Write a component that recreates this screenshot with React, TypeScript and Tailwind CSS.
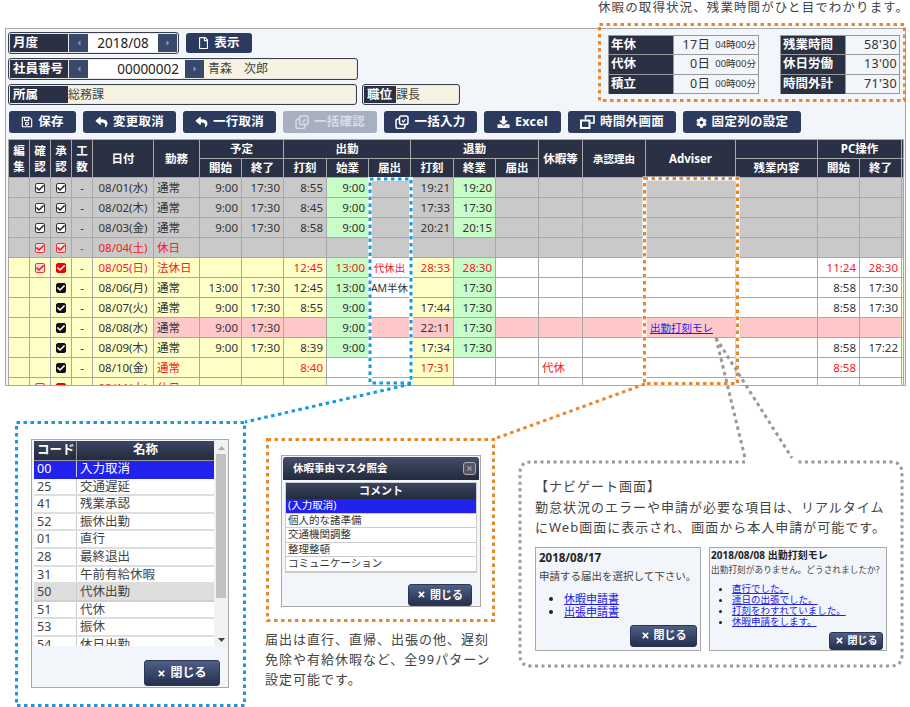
import React from "react";
import { FaRegFile, FaRegSave, FaReply, FaDownload, FaCog, FaTimes, FaCaretLeft, FaCaretRight, FaCheck } from "react-icons/fa";

const G = "bg-[#c9c9c9]";
const Y = "bg-[#ffffc8]";
const P = "bg-[#ffc8c8]";
const W = "bg-white";
const L = "bg-[#c8fcc8]";

const widths = [21, 21, 21, 21, 61, 46, 42, 42, 43, 42, 42, 43, 42, 43, 44, 63, 90, 82, 42, 42, 2];

const bgGray = [G, G, G, G, G, G, G, G, G, L, G, G, L, G, G, G, G, G, G, G, G];
const bgGrayNone = Array(21).fill(G);
const bgYellow = [Y, Y, Y, Y, Y, Y, Y, Y, Y, L, W, Y, L, W, W, W, W, W, W, W, Y];
const bgPink = [Y, Y, Y, Y, Y, P, P, P, P, L, P, P, L, P, P, P, P, P, P, P, Y];
const bgLast = [Y, Y, Y, Y, Y, Y, Y, Y, Y, W, W, Y, W, W, W, W, W, W, W, W, Y];

type Row = {
  bg: string[];
  c1?: string;
  c2?: string;
  date: string;
  kind: string;
  red?: number[];
  v: Record<number, string>;
};

const rows: Row[] = [
  { bg: bgGray, c1: "dark", c2: "dark", date: "08/01(水)", kind: "通常", v: { 6: "9:00", 7: "17:30", 8: "8:55", 9: "9:00", 11: "19:21", 12: "19:20" } },
  { bg: bgGray, c1: "dark", c2: "dark", date: "08/02(木)", kind: "通常", v: { 6: "9:00", 7: "17:30", 8: "8:45", 9: "9:00", 11: "17:33", 12: "17:30" } },
  { bg: bgGray, c1: "dark", c2: "dark", date: "08/03(金)", kind: "通常", v: { 6: "9:00", 7: "17:30", 8: "8:58", 9: "9:00", 11: "20:21", 12: "20:15" } },
  { bg: bgGrayNone, c1: "redline", c2: "redline", date: "08/04(土)", kind: "休日", red: [3, 4, 5], v: {} },
  { bg: bgYellow, c1: "redline", c2: "redfill", date: "08/05(日)", kind: "法休日", red: [3, 4, 5, 8, 9, 10, 11, 12, 18, 19], v: { 8: "12:45", 9: "13:00", 10: "代休出", 11: "28:33", 12: "28:30", 18: "11:24", 19: "28:30" } },
  { bg: bgYellow, c2: "black", date: "08/06(月)", kind: "通常", v: { 6: "13:00", 7: "17:30", 8: "12:45", 9: "13:00", 10: "AM半休", 12: "17:30", 18: "8:58", 19: "17:30" } },
  { bg: bgYellow, c2: "black", date: "08/07(火)", kind: "通常", v: { 6: "9:00", 7: "17:30", 8: "8:55", 9: "9:00", 11: "17:44", 12: "17:30", 18: "8:58", 19: "17:30" } },
  { bg: bgPink, c2: "black", date: "08/08(水)", kind: "通常", v: { 6: "9:00", 7: "17:30", 9: "9:00", 11: "22:11", 12: "17:30" } },
  { bg: bgYellow, c2: "black", date: "08/09(木)", kind: "通常", v: { 6: "9:00", 7: "17:30", 8: "8:39", 9: "9:00", 11: "17:34", 12: "17:30", 18: "8:58", 19: "17:22" } },
  { bg: bgLast, c2: "black", date: "08/10(金)", kind: "通常", red: [5, 8, 11, 14, 18], v: { 8: "8:40", 11: "17:31", 14: "代休", 18: "8:58" } },
  { bg: bgLast, c1: "redline", c2: "redfill", date: "08/11(土)", kind: "休日", red: [3, 4, 5], v: {} },
];

function CloneIcon() {
  return (
    <svg width="14" height="14" viewBox="0 0 14 14" fill="none" stroke="currentColor" strokeWidth="1.5">
      <path d="M4.5 4H3a2 2 0 0 0-2 2v5.5a2 2 0 0 0 2 2h5a2 2 0 0 0 2-2V9.5" />
      <rect x="4.5" y="1" width="8.5" height="8.5" rx="2" />
      <path d="M7 5.5l1.5 1.5 2-3" strokeWidth="1.2" />
    </svg>
  );
}

function WindowIcon() {
  return (
    <svg width="15" height="14" viewBox="0 0 15 14" fill="none" stroke="currentColor">
      <rect x="1" y="5.5" width="8.5" height="7.5" strokeWidth="2" />
      <path d="M5.5 4.5V1H14V8H10.5" strokeWidth="1.6" />
    </svg>
  );
}

function Check({ kind }: { kind?: string }) {
  if (!kind) return null;
  const box =
    kind === "dark"
      ? "bg-white border-[#333] text-[#222]"
      : kind === "redline"
      ? "bg-[#ffe0e0] border-[#f03030] text-[#f01010]"
      : kind === "redfill"
      ? "bg-[#f00000] border-[#f00000] text-white"
      : "bg-[#111] border-[#111] text-white";
  return (
    <span className={`inline-flex w-[10px] h-[10px] rounded-[2px] border items-center justify-center align-middle ${box}`}>
      <FaCheck className="w-[8px] h-[8px]" />
    </span>
  );
}

function Btn({ w, icon, label, disabled }: { w: string; icon: React.ReactNode; label: string; disabled?: boolean }) {
  return (
    <div className={`${w} h-[22px] rounded-[3px] flex items-center justify-center gap-[5px] text-[12.5px] font-bold ${disabled ? "bg-[#a8afc0] text-[#d8dce6]" : "bg-[#2c3a5e] text-white"}`}>
      {icon}
      <span className="tracking-[0.3px]">{label}</span>
    </div>
  );
}

function DlgBtn({ w, h, text }: { w: string; h: string; text: string }) {
  return (
    <div className={`${w} ${h} ${text} rounded-[3px] flex items-center justify-center gap-[4px] font-bold text-white bg-gradient-to-b from-[#4f5f85] to-[#25304f] border border-[#2c3650]`}>
      <FaTimes className="w-[9px] h-[9px]" />
      <span>閉じる</span>
    </div>
  );
}

function Arrow({ right }: { right?: boolean }) {
  return (
    <div className="w-[19px] h-full bg-[#38496b] flex items-center justify-center text-[#8c97ad]">
      {right ? <FaCaretRight className="w-[8px] h-[8px]" /> : <FaCaretLeft className="w-[8px] h-[8px]" />}
    </div>
  );
}

function Label({ w, children }: { w: string; children: React.ReactNode }) {
  return <div className={`${w} h-full bg-[#2a3145] text-white font-bold text-[12.5px] flex items-center pl-[3px] pt-[1px] shrink-0`}>{children}</div>;
}

const Group = ({ w, children }: { w: string; children: React.ReactNode }) => (
  <div className={`${w} h-[22px] border border-[#3a3f4d] rounded-[3px] p-[1px] bg-[#e8e8e8] flex`}>{children}</div>
);

function Head({ children, rowSpan, colSpan, tight }: { children?: React.ReactNode; rowSpan?: number; colSpan?: number; tight?: boolean }) {
  return (
    <th rowSpan={rowSpan} colSpan={colSpan} className={`bg-[#2a3145] border border-[#a8a8a8] text-white font-bold p-0 text-center ${tight ? "text-[10.5px]" : "text-[11.5px]"} leading-[16px] h-[19px] overflow-hidden`}>
      {children}
    </th>
  );
}

function SumRow({ label, main, sub, lw, vw }: { label: string; main: string; sub?: string; lw: string; vw: string }) {
  return (
    <div className="flex h-[19.3px] border-b border-[#999] last:border-b-0">
      <div className={`${lw} bg-[#2a3145] text-white font-bold text-[12.5px] flex items-center pl-[2px] border-r border-[#999]`}>{label}</div>
      <div className={`${vw} flex items-center justify-end pr-[2px] gap-[5px] text-[#333]`}>
        <span className="text-[12.5px] tracking-[0.3px]">{main}</span>
        {sub && <span className="text-[9.5px]">{sub}</span>}
      </div>
    </div>
  );
}

const codes = [
  ["00", "入力取消"],
  ["25", "交通遅延"],
  ["41", "残業承認"],
  ["52", "振休出勤"],
  ["01", "直行"],
  ["28", "最終退出"],
  ["31", "午前有給休暇"],
  ["50", "代休出勤"],
  ["51", "代休"],
  ["53", "振休"],
  ["54", "休日出勤"],
];

const comments = ["(入力取消)", "個人的な諸準備", "交通機関調整", "整理整頓", "コミュニケーション"];

export default function App() {
  return (
    <div className="relative w-[910px] h-[707px] overflow-hidden bg-white text-[#333] [font-family:'Noto_Sans','Noto_Sans_CJK_JP',sans-serif]">
      <div className="h-[28px] pl-[598px] text-[12.5px] leading-[15px] tracking-[1.1px] whitespace-nowrap text-[#444]">休暇の取得状況、残業時間がひと目でわかります。</div>

      <div className="ml-[5px] w-[901px] h-[358px] border border-[#a8a8a8] bg-[#f2f5f9] overflow-hidden pt-[3px]">
        <div className="flex justify-between pl-[2px] pr-[5px]">
          <div className="flex flex-col gap-[4px]">
            <div className="flex gap-[7px]">
              <Group w="w-[171px]">
                <Label w="w-[58px]">月度</Label>
                <div className="w-px" />
                <Arrow />
                <div className="w-[70px] bg-white text-center text-[13.5px] leading-[18px] text-[#222]">2018/08</div>
                <Arrow right />
              </Group>
              <Btn w="w-[66px] mt-[1px] !h-[20px]" icon={<FaRegFile className="w-[11px] h-[12px]" />} label="表示" />
            </div>
            <Group w="w-[350px]">
              <Label w="w-[58px]">社員番号</Label>
              <div className="w-px" />
              <Arrow />
              <div className="w-[97px] bg-white text-right pr-[6px] text-[13.5px] leading-[18px] text-[#222]">00000002</div>
              <Arrow right />
              <div className="flex-1 bg-[#f7f3e3] pl-[4px] text-[12px] leading-[17px] text-[#444] whitespace-pre">青森　次郎</div>
            </Group>
            <div className="flex gap-[5px]">
              <Group w="w-[349px] !h-[21px]">
                <Label w="w-[58px]">所属</Label>
                <div className="flex-1 bg-[#f7f3e3] text-[12px] leading-[17px] text-[#444]">総務課</div>
              </Group>
              <Group w="w-[98px] !h-[21px]">
                <Label w="w-[32px]">職位</Label>
                <div className="flex-1 bg-[#f7f3e3] text-[12px] leading-[17px] text-[#444]">課長</div>
              </Group>
            </div>
          </div>

          <div className="flex gap-[21px] pt-[3px]">
            <div className="w-[151px] h-[59px] border border-[#999] bg-[#f2f5f9]">
              <SumRow lw="w-[65px]" vw="w-[84px]" label="年休" main="17日" sub="04時00分" />
              <SumRow lw="w-[65px]" vw="w-[84px]" label="代休" main="0日" sub="00時00分" />
              <SumRow lw="w-[65px]" vw="w-[84px]" label="積立" main="0日" sub="00時00分" />
            </div>
            <div className="w-[120px] h-[59px] border border-[#999] bg-[#f2f5f9]">
              <SumRow lw="w-[65px]" vw="w-[53px]" label="残業時間" main="58'30" />
              <SumRow lw="w-[65px]" vw="w-[53px]" label="休日労働" main="13'00" />
              <SumRow lw="w-[65px]" vw="w-[53px]" label="時間外計" main="71'30" />
            </div>
          </div>
        </div>

        <div className="flex gap-[7px] ml-[3px] mt-[6px]">
          <Btn w="w-[67px]" icon={<FaRegSave className="w-[12px] h-[12px]" />} label="保存" />
          <Btn w="w-[93px]" icon={<FaReply className="w-[13px] h-[12px]" />} label="変更取消" />
          <Btn w="w-[93px]" icon={<FaReply className="w-[13px] h-[12px]" />} label="一行取消" />
          <Btn w="w-[94px]" disabled icon={<CloneIcon />} label="一括確認" />
          <Btn w="w-[93px]" icon={<CloneIcon />} label="一括入力" />
          <Btn w="w-[77px]" icon={<FaDownload className="w-[13px] h-[12px]" />} label="Excel" />
          <Btn w="w-[108px]" icon={<WindowIcon />} label="時間外画面" />
          <Btn w="w-[118px]" icon={<FaCog className="w-[11px] h-[11px]" />} label="固定列の設定" />
        </div>

        <table className="table-fixed border-collapse w-[895px] ml-[2px] mt-[6px] text-[11.5px] text-[#333]">
          <colgroup>
            {widths.map((w, i) => (
              <col key={i} style={{ width: w }} />
            ))}
          </colgroup>
          <thead>
            <tr>
              <Head rowSpan={2}>編<br />集</Head>
              <Head rowSpan={2}>確<br />認</Head>
              <Head rowSpan={2}>承<br />認</Head>
              <Head rowSpan={2}>工<br />数</Head>
              <Head rowSpan={2}>日付</Head>
              <Head rowSpan={2}>勤務</Head>
              <Head colSpan={2}>予定</Head>
              <Head colSpan={3}>出勤</Head>
              <Head colSpan={3}>退勤</Head>
              <Head rowSpan={2}>休暇等</Head>
              <Head rowSpan={2} tight>承認理由</Head>
              <Head rowSpan={2}>Adviser</Head>
              <Head />
              <Head colSpan={2}>PC操作</Head>
              <Head />
            </tr>
            <tr>
              <Head>開始</Head>
              <Head>終了</Head>
              <Head>打刻</Head>
              <Head>始業</Head>
              <Head>届出</Head>
              <Head>打刻</Head>
              <Head>終業</Head>
              <Head>届出</Head>
              <Head>残業内容</Head>
              <Head>開始</Head>
              <Head>終了</Head>
              <Head />
            </tr>
          </thead>
          <tbody>
            {rows.map((r, ri) => (
              <tr key={ri}>
                {r.bg.map((bg, i) => {
                  const red = r.red?.includes(i);
                  const color = red ? "text-[#f52020]" : "";
                  const align =
                    i === 1 || i === 2 || i === 3 || i === 4 || i === 10
                      ? "text-center"
                      : i === 5 || i === 14
                      ? "text-left pl-[3px]"
                      : i === 16
                      ? "text-left pl-[4px]"
                      : "text-right pr-[3px]";
                  let content: React.ReactNode = r.v[i] ?? "";
                  if (i === 1) content = <Check kind={r.c1} />;
                  if (i === 2) content = <Check kind={r.c2} />;
                  if (i === 3) content = "-";
                  if (i === 4) content = r.date;
                  if (i === 5) content = r.kind;
                  if (i === 10) content = <span className="text-[10.5px]">{r.v[10] ?? ""}</span>;
                  if (i === 16 && ri === 7)
                    content = <span className="text-[#2020ee] underline text-[10.5px]">出勤打刻モレ</span>;
                  return (
                    <td key={i} className={`${bg} ${color} ${align} border border-[#a8a8a8] h-[20px] p-0 leading-[16px] whitespace-nowrap overflow-hidden`}>
                      {content}
                    </td>
                  );
                })}
              </tr>
            ))}
          </tbody>
        </table>
      </div>

      <div className="flex items-start pl-[15px] text-[#444]">
        {/* 届出コード */}
        <div className="w-[230px] h-[285px] mt-[35px] pl-[16px] pt-[18px]">
          <div className="w-[198px] h-[249px] border border-[#a8a8a8] bg-[#f2f5f9] pl-[2px] pt-[1px]">
            <div className="flex h-[205px]">
              <div className="w-[180px] h-[205px] overflow-hidden bg-white">
                <div className="flex h-[20px] bg-gradient-to-b from-[#3c4560] to-[#242b3d] text-white font-bold text-[12.5px] border-b border-[#999]">
                  <div className="w-[43px] pl-[3px] border-r border-[#999] leading-[18px]">コード</div>
                  <div className="flex-1 text-center leading-[18px]">名称</div>
                </div>
                {codes.map(([c, n], i) => (
                  <div key={c} className={`flex h-[17.6px] border-b-2 text-[12.5px] leading-[15px] ${i === 0 ? "bg-[#2222ee] text-white border-[#2222ee]" : i === 7 ? "bg-[#dedede] border-[#cfcfcf]" : "bg-white border-[#dedede]"}`}>
                    <div className="w-[43px] pl-[3px] border-r border-[#ccc]">{c}</div>
                    <div className="flex-1 pl-[3px]">{n}</div>
                  </div>
                ))}
              </div>
              <div className="w-[14px] bg-[#f1f1f1] flex flex-col items-center">
                <div className="h-[13px] flex items-center text-[#aaa]">
                  <svg width="7" height="4" viewBox="0 0 7 4"><path d="M3.5 0L7 4H0z" fill="currentColor" /></svg>
                </div>
                <div className="w-[10px] h-[144px] bg-[#c1c1c1]" />
                <div className="flex-1" />
                <div className="h-[13px] flex items-center text-[#444]">
                  <svg width="7" height="4" viewBox="0 0 7 4"><path d="M0 0h7L3.5 4z" fill="currentColor" /></svg>
                </div>
              </div>
            </div>
            <div className="flex justify-end pr-[8px] mt-[14px]">
              <DlgBtn w="w-[76px]" h="h-[26px]" text="text-[12px]" />
            </div>
          </div>
        </div>

        {/* 休暇事由マスタ */}
        <div className="w-[228px] ml-[21px] mt-[54px]">
          <div className="h-[181px] pl-[15px] pt-[15px]">
            <div className="w-[200px] h-[152px] border border-[#a8a8a8] bg-[#f2f5f9] px-[1px] pt-[1px]">
              <div className="h-[23px] rounded-t-[3px] bg-gradient-to-b from-[#454e68] to-[#222a3c] text-white text-[10.5px] font-bold flex items-center justify-between pl-[10px] pr-[3px]">
                <span>休暇事由マスタ照会</span>
                <span className="w-[13px] h-[13px] rounded-[3px] border border-[#aab] bg-[#556] flex items-center justify-center text-[#999]">
                  <FaTimes className="w-[7px] h-[7px]" />
                </span>
              </div>
              <div className="mx-[2px] mt-[2px] w-[192px] border border-[#ccc] bg-white">
                <div className="h-[16px] bg-gradient-to-b from-[#3c4560] to-[#242b3d] text-white text-[11px] font-bold text-center leading-[15px]">コメント</div>
                {comments.map((c, i) => (
                  <div key={c} className={`h-[14.6px] pl-[2px] text-[10.5px] leading-[12px] whitespace-nowrap border-b border-[#ccc] ${i === 0 ? "bg-[#2222ee] text-white" : "text-[#333]"}`}>{c}</div>
                ))}
              </div>
              <div className="flex justify-end pr-[7px] mt-[11px]">
                <DlgBtn w="w-[64px]" h="h-[22px]" text="text-[11px]" />
              </div>
            </div>
          </div>
          <p className="mt-[8px] -ml-[1px] w-[240px] text-[13px] leading-[20px] tracking-[1px] whitespace-pre-line">{"届出は直行、直帰、出張の他、遅刻\n免除や有給休暇など、全99パターン\n設定可能です。"}</p>
        </div>

        {/* ナビゲート */}
        <div className="w-[384px] h-[206px] ml-[25px] mt-[76px] pl-[16px] pt-[14px]">
          <p className="text-[13px] leading-[20.5px] tracking-[1px] whitespace-pre-line">{"【ナビゲート画面】\n勤怠状況のエラーや申請が必要な項目は、リアルタイム\nにWeb画面に表示され、画面から本人申請が可能です。"}</p>
          <div className="flex gap-[8px] mt-[9px]">
            <div className="w-[166px] h-[104px] border border-[#a8a8a8] bg-[#f2f5f9] px-[3px] pt-[2px]">
              <div className="text-[11.5px] font-bold text-[#222] leading-[16px]">2018/08/17</div>
              <div className="text-[10.5px] leading-[16px] mt-[2px] whitespace-nowrap">申請する届出を選択して下さい。</div>
              <ul className="list-disc pl-[25px] mt-[8px] text-[11px] leading-[13.5px] marker:text-[#222]">
                <li><span className="text-[#2020ee] underline">休暇申請書</span></li>
                <li><span className="text-[#2020ee] underline">出張申請書</span></li>
              </ul>
              <div className="flex justify-end mt-[6px]">
                <DlgBtn w="w-[67px]" h="h-[22px]" text="text-[11px]" />
              </div>
            </div>
            <div className="w-[178px] h-[104px] border border-[#a8a8a8] bg-[#f2f5f9] px-[1px] pt-[1px]">
              <div className="text-[10px] font-bold text-[#222] leading-[13px]">2018/08/08 出勤打刻モレ</div>
              <div className="text-[8.7px] leading-[13px] mt-[2px] whitespace-nowrap">出勤打刻がありません。どうされましたか?</div>
              <ul className="list-disc pl-[21px] mt-[6px] text-[9.5px] leading-[11px] marker:text-[#222]">
                <li><span className="text-[#2020ee] underline">直行でした。</span></li>
                <li><span className="text-[#2020ee] underline">連日の出張でした。</span></li>
                <li><span className="text-[#2020ee] underline">打刻をわすれていました。</span></li>
                <li><span className="text-[#2020ee] underline">休暇申請をします。</span></li>
              </ul>
              <div className="flex justify-end pr-[2px] mt-[5px]">
                <DlgBtn w="w-[54px]" h="h-[18px]" text="text-[10px]" />
              </div>
            </div>
          </div>
        </div>
      </div>

      {/* 注釈の枠と引き出し線 */}
      <svg className="absolute inset-0 pointer-events-none" width="910" height="707" fill="none">
        <rect x="599.5" y="24.5" width="305" height="76" stroke="#e8872b" strokeWidth="3" strokeDasharray="3.5 3.5" />
        <rect x="370" y="179" width="41" height="204" stroke="#fff" strokeWidth="4" />
        <rect x="370" y="179" width="41" height="204" stroke="#129be0" strokeWidth="3" strokeDasharray="3.5 3.5" />
        <rect x="644.5" y="178.5" width="93" height="205" stroke="#fff" strokeWidth="4" />
        <rect x="644.5" y="178.5" width="93" height="205" stroke="#e8872b" strokeWidth="3" strokeDasharray="3.5 3.5" />
        <path d="M411 384L245 422" stroke="#129be0" strokeWidth="3" strokeDasharray="3.5 3.5" />
        <path d="M645 384L494 439" stroke="#e8872b" strokeWidth="3" strokeDasharray="3.5 3.5" />
        <rect x="16.5" y="422.5" width="228" height="283" stroke="#129be0" strokeWidth="3" strokeDasharray="3.5 3.5" />
        <rect x="267.5" y="439.5" width="226" height="181" stroke="#e8872b" strokeWidth="3" strokeDasharray="3.5 3.5" />
        <path d="M716 338L745 458" stroke="#999" strokeWidth="3" strokeDasharray="3.5 3.5" />
        <path d="M716 338L792 458" stroke="#999" strokeWidth="3" strokeDasharray="3.5 3.5" />
        <path d="M745 462H531Q520 462 520 473V655Q520 666 531 666H891Q902 666 902 655V473Q902 462 891 462H795" stroke="#999" strokeWidth="3" strokeDasharray="3 3.5" />
      </svg>
    </div>
  );
}
